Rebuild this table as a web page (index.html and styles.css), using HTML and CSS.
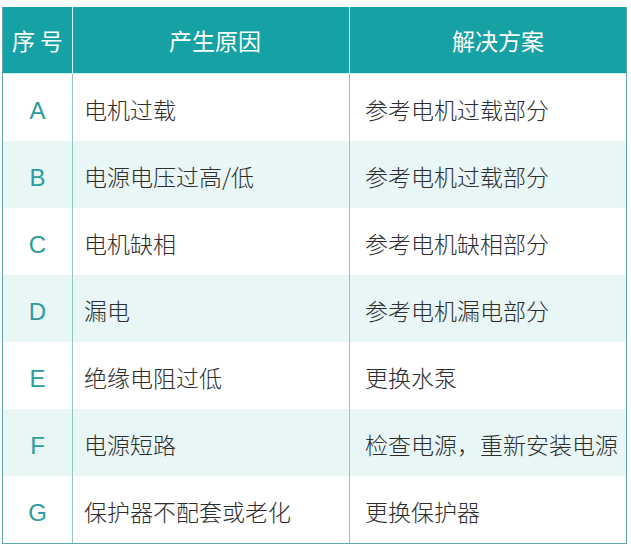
FILE: index.html
```html
<!DOCTYPE html>
<html lang="zh">
<head>
<meta charset="utf-8">
<link rel="stylesheet" href="styles.css">
</head>
<body>
<div class="table">
  <div class="row head">
    <div class="cell c1">序 号</div>
    <div class="cell c2">产生原因</div>
    <div class="cell c3">解决方案</div>
  </div>
  <div class="row">
    <div class="cell c1"><span class="letter">A</span></div>
    <div class="cell c2">电机过载</div>
    <div class="cell c3">参考电机过载部分</div>
  </div>
  <div class="row alt">
    <div class="cell c1"><span class="letter">B</span></div>
    <div class="cell c2">电源电压过高/低</div>
    <div class="cell c3">参考电机过载部分</div>
  </div>
  <div class="row">
    <div class="cell c1"><span class="letter">C</span></div>
    <div class="cell c2">电机缺相</div>
    <div class="cell c3">参考电机缺相部分</div>
  </div>
  <div class="row alt">
    <div class="cell c1"><span class="letter">D</span></div>
    <div class="cell c2">漏电</div>
    <div class="cell c3">参考电机漏电部分</div>
  </div>
  <div class="row">
    <div class="cell c1"><span class="letter">E</span></div>
    <div class="cell c2">绝缘电阻过低</div>
    <div class="cell c3">更换水泵</div>
  </div>
  <div class="row alt">
    <div class="cell c1"><span class="letter">F</span></div>
    <div class="cell c2">电源短路</div>
    <div class="cell c3">检查电源，重新安装电源</div>
  </div>
  <div class="row">
    <div class="cell c1"><span class="letter">G</span></div>
    <div class="cell c2">保护器不配套或老化</div>
    <div class="cell c3">更换保护器</div>
  </div>
</div>
</body>
</html>
```

FILE: styles.css
```css
html, body {
  margin: 0;
  padding: 0;
  background: #ffffff;
}
body {
  padding: 7px 0 0 2px;
  font-family: "Noto Sans CJK SC", "Noto Sans", sans-serif;
}
.table {
  width: 623px;
  border: 1px solid #5ea9aa;
  border-top: none;
  display: flex;
  flex-direction: column;
}
.row {
  display: grid;
  grid-template-columns: 69px 277px 1fr;
  height: 67px;
  background: #ffffff;
}
.row.alt {
  background: #e9f6f6;
}
.row.head {
  background: #16a1a4;
  height: 66px;
  border-bottom: 1px solid #c6f2f3;
  color: #ffffff;
}
.cell {
  display: flex;
  align-items: center;
  font-size: 23px;
  font-weight: 300;
  color: #2e2e2e;
  padding-top: 3px;
  box-sizing: border-box;
  white-space: nowrap;
}
.cell.c2 {
  border-left: 1px solid #8fc7c8;
  padding-left: 11px;
}
.cell.c3 {
  border-left: 1px solid #8fc7c8;
  padding-left: 15px;
}
.head .cell {
  color: #ffffff;
  justify-content: center;
  padding-top: 0;
  font-weight: 400;
}
.head .cell.c2,
.head .cell.c3 {
  border-left: 1px solid #c6f2f3;
}
.head .cell.c2 {
  padding-left: 8px;
}
.head .cell.c3 {
  padding-left: 20px;
}
.cell.c1 {
  justify-content: center;
}
.letter {
  font-family: "Liberation Sans", Arial, sans-serif;
  font-size: 24px;
  font-weight: 400;
  color: #2c9c9d;
  padding-top: 3px;
}
```
